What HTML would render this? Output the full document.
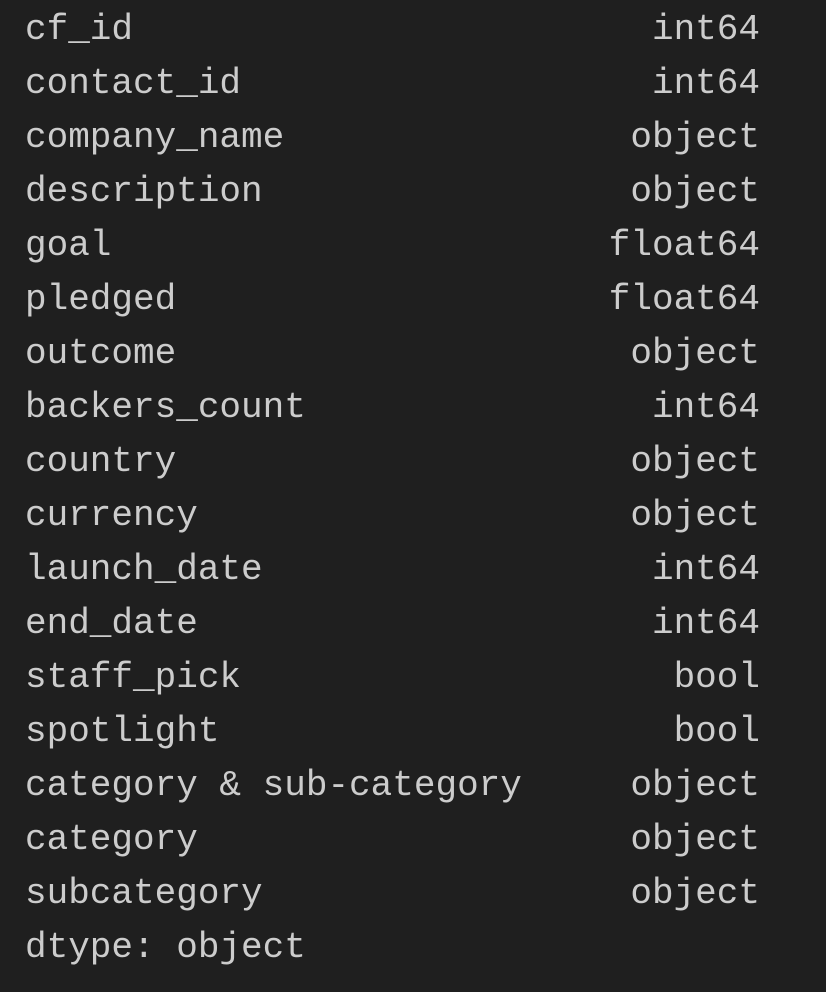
<!DOCTYPE html><html><head><style>
body{margin:0;background:#1f1f1f;width:826px;height:992px;overflow:hidden}
.w{position:absolute;left:25px;top:3px;width:735px;font-family:"Liberation Mono",monospace;font-size:36px;line-height:54px;color:#cccccc}
.r{display:flex;justify-content:space-between;white-space:pre;height:54px}
</style></head><body><div class="w">
<div class="r"><span>cf_id</span><span>int64</span></div>
<div class="r"><span>contact_id</span><span>int64</span></div>
<div class="r"><span>company_name</span><span>object</span></div>
<div class="r"><span>description</span><span>object</span></div>
<div class="r"><span>goal</span><span>float64</span></div>
<div class="r"><span>pledged</span><span>float64</span></div>
<div class="r"><span>outcome</span><span>object</span></div>
<div class="r"><span>backers_count</span><span>int64</span></div>
<div class="r"><span>country</span><span>object</span></div>
<div class="r"><span>currency</span><span>object</span></div>
<div class="r"><span>launch_date</span><span>int64</span></div>
<div class="r"><span>end_date</span><span>int64</span></div>
<div class="r"><span>staff_pick</span><span>bool</span></div>
<div class="r"><span>spotlight</span><span>bool</span></div>
<div class="r"><span>category &amp; sub-category</span><span>object</span></div>
<div class="r"><span>category</span><span>object</span></div>
<div class="r"><span>subcategory</span><span>object</span></div>
<div class="r"><span>dtype: object</span><span></span></div>
</div></body></html>
